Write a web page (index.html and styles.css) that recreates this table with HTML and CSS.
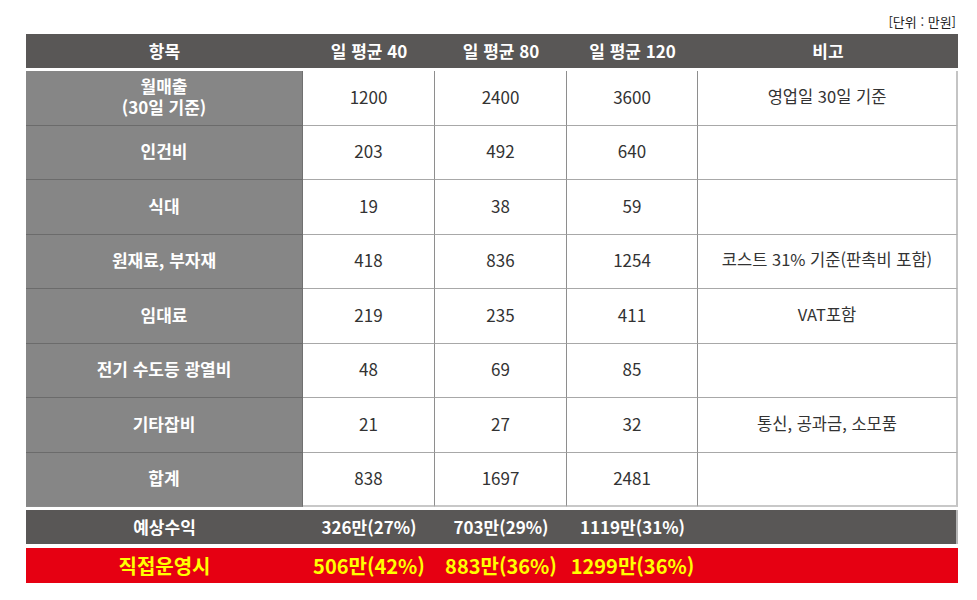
FILE: index.html
```html
<!DOCTYPE html>
<html lang="ko">
<head>
<meta charset="utf-8">
<title>수익 분석</title>
<link rel="stylesheet" href="styles.css">
</head>
<body>
<div class="page">
  <div class="unit">[단위 : 만원]</div>
  <div class="bar head">
    <div>항목</div><div>일 평균 40</div><div>일 평균 80</div><div>일 평균 120</div><div>비고</div>
  </div>
  <div class="grid">
    <div class="lab">월매출<br>(30일 기준)</div><div class="c">1200</div><div class="c">2400</div><div class="c">3600</div><div class="c note">영업일 30일 기준</div>
    <div class="lab">인건비</div><div class="c">203</div><div class="c">492</div><div class="c">640</div><div class="c note"></div>
    <div class="lab">식대</div><div class="c">19</div><div class="c">38</div><div class="c">59</div><div class="c note"></div>
    <div class="lab">원재료, 부자재</div><div class="c">418</div><div class="c">836</div><div class="c">1254</div><div class="c note">코스트 31% 기준(판촉비 포함)</div>
    <div class="lab">임대료</div><div class="c">219</div><div class="c">235</div><div class="c">411</div><div class="c note">VAT포함</div>
    <div class="lab">전기 수도등 광열비</div><div class="c">48</div><div class="c">69</div><div class="c">85</div><div class="c note"></div>
    <div class="lab">기타잡비</div><div class="c">21</div><div class="c">27</div><div class="c">32</div><div class="c note">통신, 공과금, 소모품</div>
    <div class="lab last">합계</div><div class="c last">838</div><div class="c last">1697</div><div class="c last">2481</div><div class="c note last"></div>
  </div>
  <div class="bar profit">
    <div>예상수익</div><div>326만(27%)</div><div>703만(29%)</div><div>1119만(31%)</div><div></div>
  </div>
  <div class="bar direct">
    <div>직접운영시</div><div>506만(42%)</div><div>883만(36%)</div><div>1299만(36%)</div><div></div>
  </div>
</div>
</body>
</html>
```
FILE: styles.css
```css
html, body {
  margin: 0;
  padding: 0;
  background: #ffffff;
}
body {
  font-family: "Noto Sans CJK KR", "Noto Sans", sans-serif;
  color: #333333;
}
.page {
  width: 932px;
  margin-left: 26px;
  padding-top: 14px;
}
.unit {
  text-align: right;
  font-size: 13px;
  line-height: 16px;
  height: 16px;
  color: #222222;
  padding-right: 2px;
}
.bar {
  display: grid;
  grid-template-columns: 277px 132px 132px 131px 260px;
  align-items: center;
  text-align: center;
  font-weight: bold;
}
.head {
  margin-top: 4px;
  height: 34px;
  background: #595756;
  color: #ffffff;
  font-size: 17px;
  line-height: 34px;
}
.grid {
  margin-top: 3px;
  display: grid;
  grid-template-columns: 277px 132px 132px 131px 260px;
  grid-auto-rows: 54.5px;
  font-size: 17px;
}
.grid > div {
  display: flex;
  align-items: center;
  justify-content: center;
  text-align: center;
  box-sizing: border-box;
  line-height: 21px;
  padding-bottom: 3px;
}
.lab {
  background: #868686;
  color: #ffffff;
  font-weight: bold;
  border-bottom: 1px solid #6b6b6b;
  border-right: 1px solid #707070;
}
.c {
  background: #ffffff;
  color: #333333;
  border-bottom: 1px solid #a8a8a8;
  border-right: 1px solid #8e8e8e;
}
.c.note {
  font-size: 16.5px;
  border-right: 2px solid #c4c4c4;
}
.lab.last {
  border-bottom: 1px solid #8a8a8a;
}
.c.last {
  border-bottom: 2px solid #c8c8c8;
}
.profit {
  margin-top: 3px;
  height: 34px;
  background: #595756;
  color: #ffffff;
  font-size: 17px;
  line-height: 32px;
  border-right: 2px solid #b5b5b5;
  box-sizing: border-box;
}
.direct {
  margin-top: 4px;
  height: 35px;
  background: #e60012;
  color: #ffff00;
  font-size: 20px;
  line-height: 32px;
}
```
